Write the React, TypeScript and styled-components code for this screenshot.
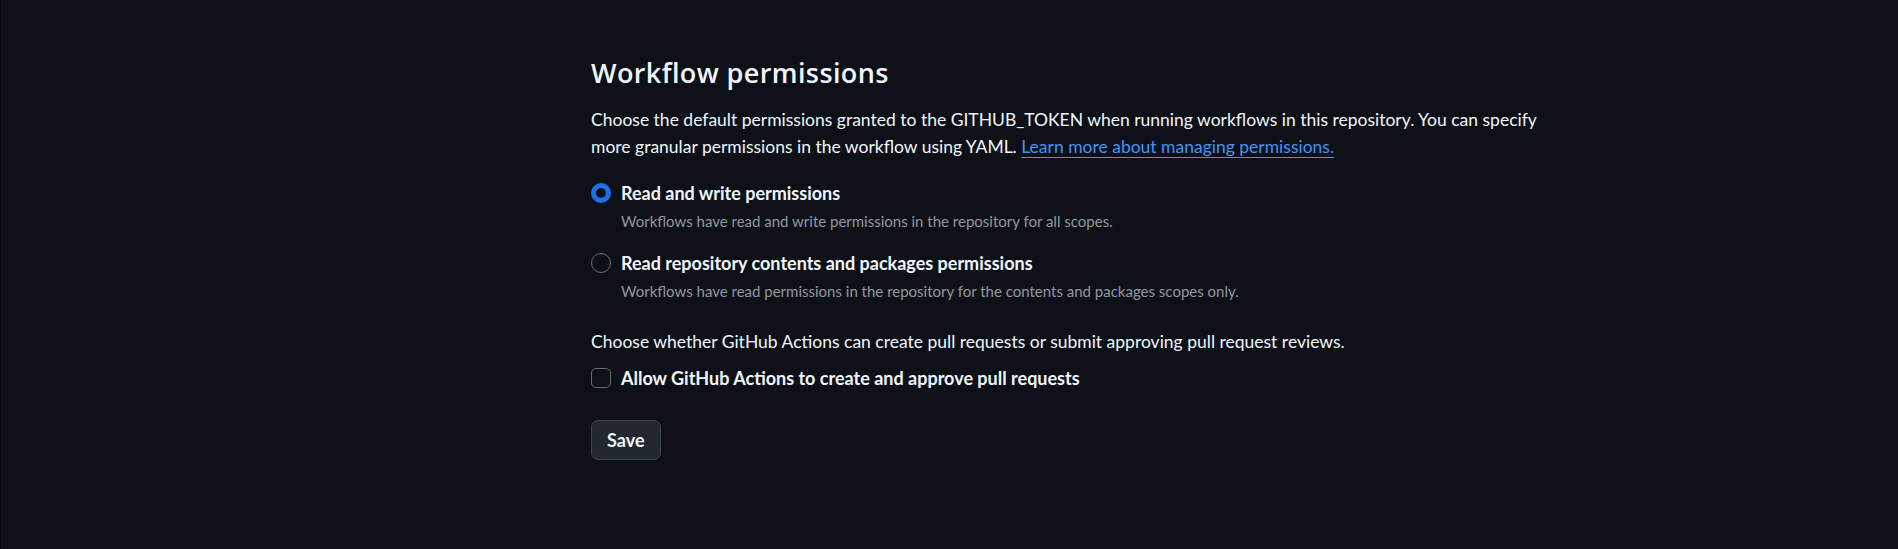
import React from "react";
import styled, { createGlobalStyle } from "styled-components";

const Global = createGlobalStyle`
  html, body { margin: 0; padding: 0; background: #0d1117; }
  body { font-family: Lato, "Noto Sans", sans-serif; color: #f0f6fc; }
  * { box-sizing: border-box; }
`;

const Page = styled.div`
  min-height: 549px;
  background: #0d1117;
  border-left: 1px solid #010409;
  display: grid;
  grid-template-columns: 590px 960px;
  padding-top: 54px;
`;

const Main = styled.main`
  grid-column: 2;
  display: flex;
  flex-direction: column;
`;

const Heading = styled.h2`
  margin: 0 0 14px;
  font-family: "Open Sans", "Noto Sans", sans-serif;
  font-size: 27px;
  line-height: 38px;
  font-weight: 600;
  letter-spacing: 0.4px;
  color: #f0f6fc;
`;

const Paragraph = styled.p`
  margin: 0;
  font-size: 17.5px;
  line-height: 27px;
  color: #f0f6fc;
`;

const Link = styled.a`
  color: #4493f8;
  text-decoration: underline;
  text-underline-offset: 4px;
`;

const OptionList = styled.div`
  display: flex;
  flex-direction: column;
  gap: 18px;
  margin: 20px 0 26px;
`;

const Option = styled.label`
  display: grid;
  grid-template-columns: 20px 1fr;
  column-gap: 10px;
  align-items: center;
  cursor: pointer;
`;

const Radio = styled.span<{ $checked?: boolean }>`
  width: 20px;
  height: 20px;
  border-radius: 50%;
  border: ${(p) => (p.$checked ? "5px solid #1f6feb" : "1px solid #656c76")};
  background: #0d1117;
`;

const Checkbox = styled.span`
  width: 20px;
  height: 20px;
  border-radius: 5px;
  border: 1px solid #656c76;
  background: #0d1117;
`;

const OptionLabel = styled.span`
  font-size: 18px;
  line-height: 26px;
  font-weight: 700;
  color: #f0f6fc;
`;

const OptionNote = styled.span`
  grid-column: 2;
  font-size: 15px;
  line-height: 22px;
  color: #9198a1;
  margin-top: 4px;
`;

const CheckRow = styled(Option)`
  margin: 10px 0 29px;
`;

const Button = styled.button`
  align-self: flex-start;
  height: 40px;
  padding: 0 15px;
  border-radius: 7px;
  border: 1px solid #3d444d;
  background: #212830;
  color: #f0f6fc;
  font-family: inherit;
  font-size: 18px;
  font-weight: 700;
  cursor: pointer;
`;

export default function App() {
  return (
    <>
      <Global />
      <Page>
        <Main>
          <Heading>Workflow permissions</Heading>
          <Paragraph>
            Choose the default permissions granted to the GITHUB_TOKEN when running workflows in this repository. You can
            specify more granular permissions in the workflow using YAML.{" "}
            <Link href="#">Learn more about managing permissions.</Link>
          </Paragraph>
          <OptionList>
            <Option>
              <Radio $checked />
              <OptionLabel>Read and write permissions</OptionLabel>
              <OptionNote>Workflows have read and write permissions in the repository for all scopes.</OptionNote>
            </Option>
            <Option>
              <Radio />
              <OptionLabel>Read repository contents and packages permissions</OptionLabel>
              <OptionNote>
                Workflows have read permissions in the repository for the contents and packages scopes only.
              </OptionNote>
            </Option>
          </OptionList>
          <Paragraph>
            Choose whether GitHub Actions can create pull requests or submit approving pull request reviews.
          </Paragraph>
          <CheckRow>
            <Checkbox />
            <OptionLabel>Allow GitHub Actions to create and approve pull requests</OptionLabel>
          </CheckRow>
          <Button>Save</Button>
        </Main>
      </Page>
    </>
  );
}
